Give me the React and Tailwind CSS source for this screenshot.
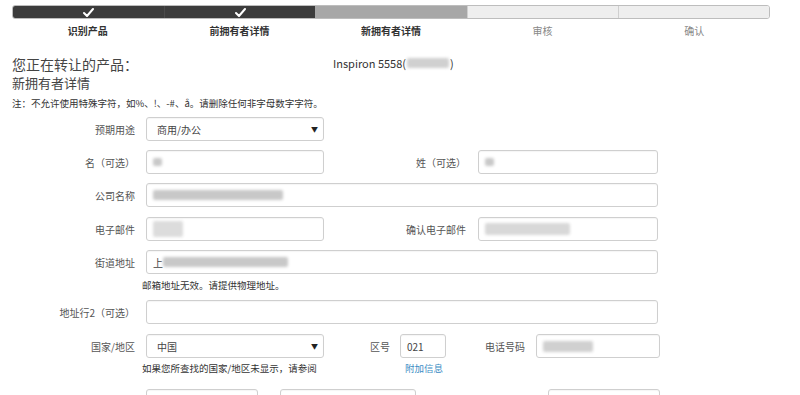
import React from "react";

const font = { fontFamily: '"Noto Sans CJK SC", "Noto Sans", sans-serif' };

function Blur({ w, h = 12, className = "" }) {
  return <div className={"bg-[#c8c8c8] blur-[1.5px] rounded-[2px] " + className} style={{ width: w, height: h }} />;
}

function Input({ w, children, select }) {
  return (
    <div
      className="h-[24px] border border-[#cfcfcf] rounded-[3px] bg-white flex items-center px-[6px] text-[10px] text-[#444] shadow-[inset_0_1px_1px_rgba(0,0,0,0.04)] shrink-0"
      style={{ width: w }}
    >
      <div className="flex-1 flex items-center">{children}</div>
      {select && <span className="text-[7px] text-[#222] mr-[-1px]">▼</span>}
    </div>
  );
}

function Label({ w, children, className = "" }) {
  return (
    <div className={"text-right text-[10px] text-[#555] shrink-0 " + className} style={{ width: w }}>
      {children}
    </div>
  );
}

export default function App() {
  const steps = [
    { t: "识别产品", done: true },
    { t: "前拥有者详情", done: true },
    { t: "新拥有者详情", cur: true },
    { t: "审核" },
    { t: "确认" },
  ];
  return (
    <div className="w-[800px] h-[395px] overflow-hidden bg-white text-[#333]" style={font}>
      {/* progress */}
      <div className="pt-[5px] pl-[12px]">
        <div className="w-[758px] h-[14px] grid grid-cols-5 rounded-[3px] overflow-hidden border border-[#bdbdbd]">
          {steps.map((s, i) => (
            <div
              key={i}
              className={
                "flex items-center justify-center " +
                (s.done ? "bg-[#3c3c3c] " : s.cur ? "bg-[#a7a7a7] " : "bg-[#eeeeee] ") +
                (i > 0 && !s.done && !s.cur ? "border-l border-[#cfcfcf]" : "") +
                (i === 1 ? "border-l border-[#4a4a4a]" : "")
              }
            >
              {s.done && (
                <svg width="11" height="9" viewBox="0 0 11 9">
                  <path d="M1 5 L4 8 L10 1" stroke="white" strokeWidth="2" fill="none" strokeLinecap="round" strokeLinejoin="round" />
                </svg>
              )}
            </div>
          ))}
        </div>
        <div className="w-[758px] grid grid-cols-5 mt-[5px] leading-[14px]">
          {steps.map((s, i) => (
            <div
              key={i}
              className={"text-center text-[10px] " + (s.done || s.cur ? "font-bold text-[#333]" : "text-[#888]")}
            >
              {s.t}
            </div>
          ))}
        </div>
      </div>

      {/* title */}
      <div className="pl-[12px] mt-[17px] flex items-center h-[18px]">
        <div className="w-[321px] text-[14px] text-[#444] leading-[18px]">您正在转让的产品：</div>
        <div className="flex items-center text-[11px] leading-[14px] text-[#333] mt-[-2px]">
          <span>Inspiron 5558(</span>
          <Blur w={42} h={10} className="mx-[1px] bg-[#d0d0d0]" />
          <span>)</span>
        </div>
      </div>
      <div className="pl-[12px] text-[13px] leading-[16px] text-[#444] mt-[2px]">新拥有者详情</div>
      <div className="pl-[12px] text-[9.5px] leading-[14px] text-[#333] mt-[5px]">
        注：不允许使用特殊字符，如%、!、-#、å。请删除任何非字母数字字符。
      </div>

      {/* form */}
      <div className="pl-[12px] mt-[7px] flex flex-col">
        <div className="flex items-center h-[24px]">
          <Label w={123} className="mr-[11px]">预期用途</Label>
          <Input w={178} select>
            <span className="pl-[4px]">商用/办公</span>
          </Input>
        </div>

        <div className="flex items-center h-[24px] mt-[9px]">
          <Label w={123} className="mr-[11px]">名（可选）</Label>
          <Input w={178}>
            <Blur w={9} h={8} />
          </Input>
          <Label w={142}>姓（可选）</Label>
          <div className="w-[12px]" />
          <Input w={180}>
            <Blur w={9} h={8} />
          </Input>
        </div>

        <div className="flex items-center h-[24px] mt-[9px]">
          <Label w={123} className="mr-[11px]">公司名称</Label>
          <Input w={512}>
            <Blur w={130} h={10} />
          </Input>
        </div>

        <div className="flex items-center h-[24px] mt-[10px]">
          <Label w={123} className="mr-[11px]">电子邮件</Label>
          <Input w={178}>
            <Blur w={30} h={16} className="bg-[#dcdcdc]" />
          </Input>
          <Label w={142}>确认电子邮件</Label>
          <div className="w-[12px]" />
          <Input w={180}>
            <Blur w={85} h={12} className="bg-[#d8d8d8]" />
          </Input>
        </div>

        <div className="flex items-center h-[24px] mt-[9px]">
          <Label w={123} className="mr-[11px]">街道地址</Label>
          <Input w={512}>
            <span className="text-[10px]">上</span>
            <Blur w={125} h={10} />
          </Input>
        </div>
        <div className="pl-[130px] text-[9.5px] leading-[14px] text-[#333] mt-[4px]">邮箱地址无效。请提供物理地址。</div>

        <div className="flex items-center h-[24px] mt-[8px]">
          <Label w={123} className="mr-[11px]">地址行2（可选）</Label>
          <Input w={512} />
        </div>

        <div className="flex items-center h-[24px] mt-[10px]">
          <Label w={123} className="mr-[11px]">国家/地区</Label>
          <Input w={178} select>
            <span className="pl-[4px]">中国</span>
          </Input>
          <Label w={66}>区号</Label>
          <div className="w-[10px]" />
          <Input w={46}>
            <span>021</span>
          </Input>
          <Label w={79}>电话号码</Label>
          <div className="w-[11px]" />
          <Input w={124}>
            <Blur w={50} h={11} className="bg-[#d0d0d0]" />
          </Input>
        </div>
        <div className="flex text-[9.5px] leading-[14px] mt-[3px]">
          <div className="pl-[130px] w-[393px] text-[#333]">如果您所查找的国家/地区未显示，请参阅</div>
          <div className="text-[#3a8cc4]">附加信息</div>
        </div>

        <div className="flex items-center h-[24px] mt-[14px]">
          <Label w={123} className="mr-[11px] text-[#bbb]">城市</Label>
          <Input w={112} />
          <div className="w-[22px]" />
          <Input w={136} />
          <Label w={120} className="text-[#bbb]">邮政编码</Label>
          <div className="w-[12px]" />
          <Input w={112} />
        </div>
      </div>
    </div>
  );
}
